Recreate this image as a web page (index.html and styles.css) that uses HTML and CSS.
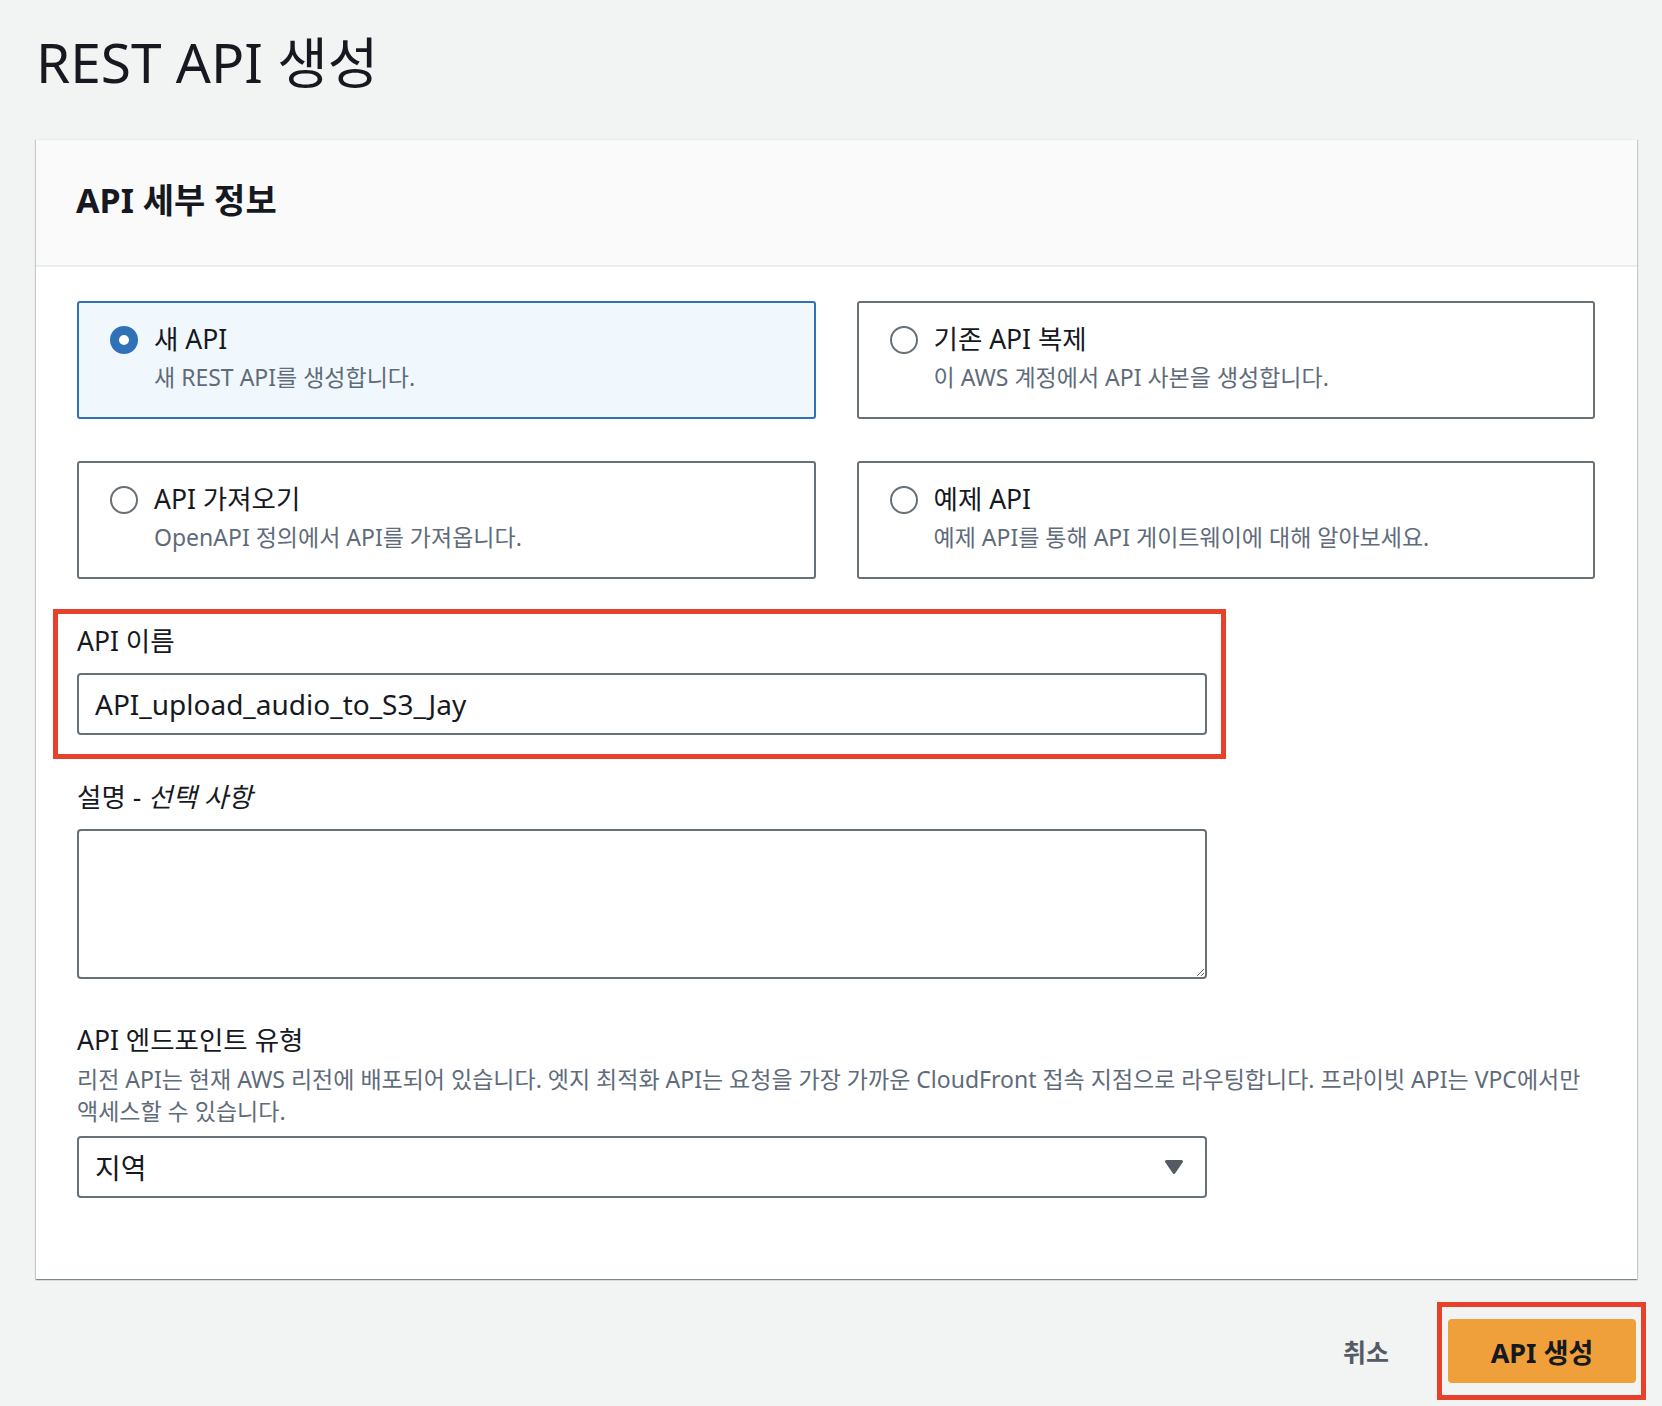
FILE: index.html
```html
<!DOCTYPE html>
<html lang="ko">
<head>
<meta charset="utf-8">
<title>REST API 생성</title>
<link rel="stylesheet" href="styles.css">
</head>
<body>
<div class="page">
  <h1 class="title">REST API 생성</h1>

  <section class="card">
    <div class="card-header">
      <h2 class="card-title">API 세부 정보</h2>
    </div>
    <div class="card-body">
      <div class="tiles">
        <div class="tile selected">
          <span class="radio on"></span>
          <div class="tile-text">
            <div class="tile-label">새 API</div>
            <div class="tile-desc">새 REST API를 생성합니다.</div>
          </div>
        </div>
        <div class="tile">
          <span class="radio"></span>
          <div class="tile-text">
            <div class="tile-label">기존 API 복제</div>
            <div class="tile-desc">이 AWS 계정에서 API 사본을 생성합니다.</div>
          </div>
        </div>
        <div class="tile">
          <span class="radio"></span>
          <div class="tile-text">
            <div class="tile-label">API 가져오기</div>
            <div class="tile-desc">OpenAPI 정의에서 API를 가져옵니다.</div>
          </div>
        </div>
        <div class="tile">
          <span class="radio"></span>
          <div class="tile-text">
            <div class="tile-label">예제 API</div>
            <div class="tile-desc">예제 API를 통해 API 게이트웨이에 대해 알아보세요.</div>
          </div>
        </div>
      </div>

      <div class="field field-name highlight">
        <label class="field-label" for="api-name">API 이름</label>
        <input class="text-input" id="api-name" type="text" value="API_upload_audio_to_S3_Jay">
      </div>

      <div class="field field-desc">
        <label class="field-label" for="api-desc">설명 - <i>선택 사항</i></label>
        <textarea class="text-area" id="api-desc"></textarea>
      </div>

      <div class="field field-endpoint">
        <div class="field-label">API 엔드포인트 유형</div>
        <div class="field-help">리전 API는 현재 AWS 리전에 배포되어 있습니다. 엣지 최적화 API는 요청을 가장 가까운 CloudFront 접속 지점으로 라우팅합니다. 프라이빗 API는 VPC에서만 액세스할 수 있습니다.</div>
        <div class="select">
          <span class="select-value">지역</span>
          <svg class="caret" width="20" height="16" viewBox="0 0 20 16" aria-hidden="true">
            <path d="M2.5 2.5 H17.5 L10 13.5 Z" fill="#545b64" stroke="#545b64" stroke-width="3" stroke-linejoin="round"/>
          </svg>
        </div>
      </div>
    </div>
  </section>

  <div class="footer">
    <button class="link-btn" type="button">취소</button>
    <div class="highlight-btn">
      <button class="primary-btn" type="button">API 생성</button>
    </div>
  </div>
</div>
</body>
</html>
```

FILE: styles.css
```css
* {
  box-sizing: border-box;
}

html, body {
  margin: 0;
  padding: 0;
}

body {
  background: #f2f3f3;
  font-family: "Noto Sans", "Noto Sans CJK KR", sans-serif;
  color: #16191f;
}

.page {
  padding: 0 25px 0 36px;
}

.title {
  margin: 30px 0 45px 0;
  padding-left: 0;
  font-size: 55px;
  line-height: 64px;
  font-weight: 400;
  color: #16191f;
}

.card {
  background: #ffffff;
  border-top: 1px solid #eaeded;
  box-shadow: 0 1px 1px 0 rgba(0, 28, 36, 0.3), 1px 1px 1px 0 rgba(0, 28, 36, 0.15), -1px 1px 1px 0 rgba(0, 28, 36, 0.15);
}

.card-header {
  background: #fafafa;
  border-bottom: 2px solid #eaeded;
  padding: 40px 40px 45px 40px;
}

.card-title {
  margin: 0;
  font-size: 34px;
  line-height: 40px;
  font-weight: 700;
  color: #16191f;
}

.card-body {
  padding: 34px 42px 81px 41px;
}

.tiles {
  display: grid;
  grid-template-columns: 1fr 1fr;
  column-gap: 41px;
  row-gap: 42px;
}

.tile {
  display: flex;
  align-items: flex-start;
  gap: 16px;
  border: 2px solid #687078;
  border-radius: 3px;
  padding: 19px 20px 21px 31px;
  background: #ffffff;
}

.tile.selected {
  border-color: #2f72b8;
  background: #f1f8fd;
}

.radio {
  flex: none;
  width: 28px;
  height: 28px;
  margin-top: 4px;
  border-radius: 50%;
  border: 2px solid #687078;
  background: #ffffff;
}

.radio.on {
  border: 9px solid #2f72b8;
}

.tile-label {
  font-size: 26.5px;
  line-height: 34px;
  color: #16191f;
}

.tile-desc {
  margin-top: 2px;
  font-size: 23px;
  line-height: 38px;
  color: #5f6b7a;
}

.field {
  width: 1130px;
}

.field-label {
  display: block;
  font-size: 26.5px;
  line-height: 34px;
  color: #16191f;
  margin-bottom: 15px;
}

.field-label i {
  font-style: italic;
}

.highlight {
  box-sizing: content-box;
  margin: 30px 0 0 -24px;
  border: 5px solid #e8412b;
  padding: 10px 14px 19px 19px;
}

.field-desc {
  margin-top: 21px;
}

.field-endpoint {
  width: auto;
  margin-top: 44px;
}

.field-endpoint .field-label {
  margin-bottom: 6px;
}

.field-help {
  font-size: 23px;
  line-height: 32px;
  color: #5f6b7a;
  margin-bottom: 9px;
}

.text-input {
  display: block;
  width: 1130px;
  height: 62px;
  border: 2px solid #687078;
  border-radius: 4px;
  padding: 0 16px;
  font: inherit;
  font-size: 28px;
  color: #16191f;
  background: #ffffff;
  outline: none;
}

.text-area {
  display: block;
  width: 1130px;
  height: 150px;
  border: 2px solid #687078;
  border-radius: 4px;
  padding: 10px 16px;
  font: inherit;
  font-size: 27px;
  background: #ffffff;
  margin: 0;
}

.select {
  display: flex;
  align-items: center;
  justify-content: space-between;
  width: 1130px;
  height: 62px;
  border: 2px solid #687078;
  border-radius: 4px;
  padding: 0 21px 0 16px;
  background: #ffffff;
}

.select-value {
  font-size: 28px;
  color: #16191f;
}

.caret {
  display: block;
}

.footer {
  display: flex;
  justify-content: flex-end;
  align-items: center;
  margin: 23px -9px 0 0;
}

.link-btn {
  background: none;
  border: none;
  padding: 0;
  margin-right: 48px;
  font-family: inherit;
  font-size: 25px;
  font-weight: 700;
  color: #545b64;
  cursor: pointer;
}

.highlight-btn {
  border: 5px solid #e8412b;
  padding: 12px 5px 12px 6px;
}

.primary-btn {
  display: block;
  width: 188px;
  height: 64px;
  border: none;
  border-radius: 4px;
  background: #f0a03a;
  font-family: inherit;
  font-size: 27px;
  font-weight: 700;
  color: #16191f;
  cursor: pointer;
}
```
